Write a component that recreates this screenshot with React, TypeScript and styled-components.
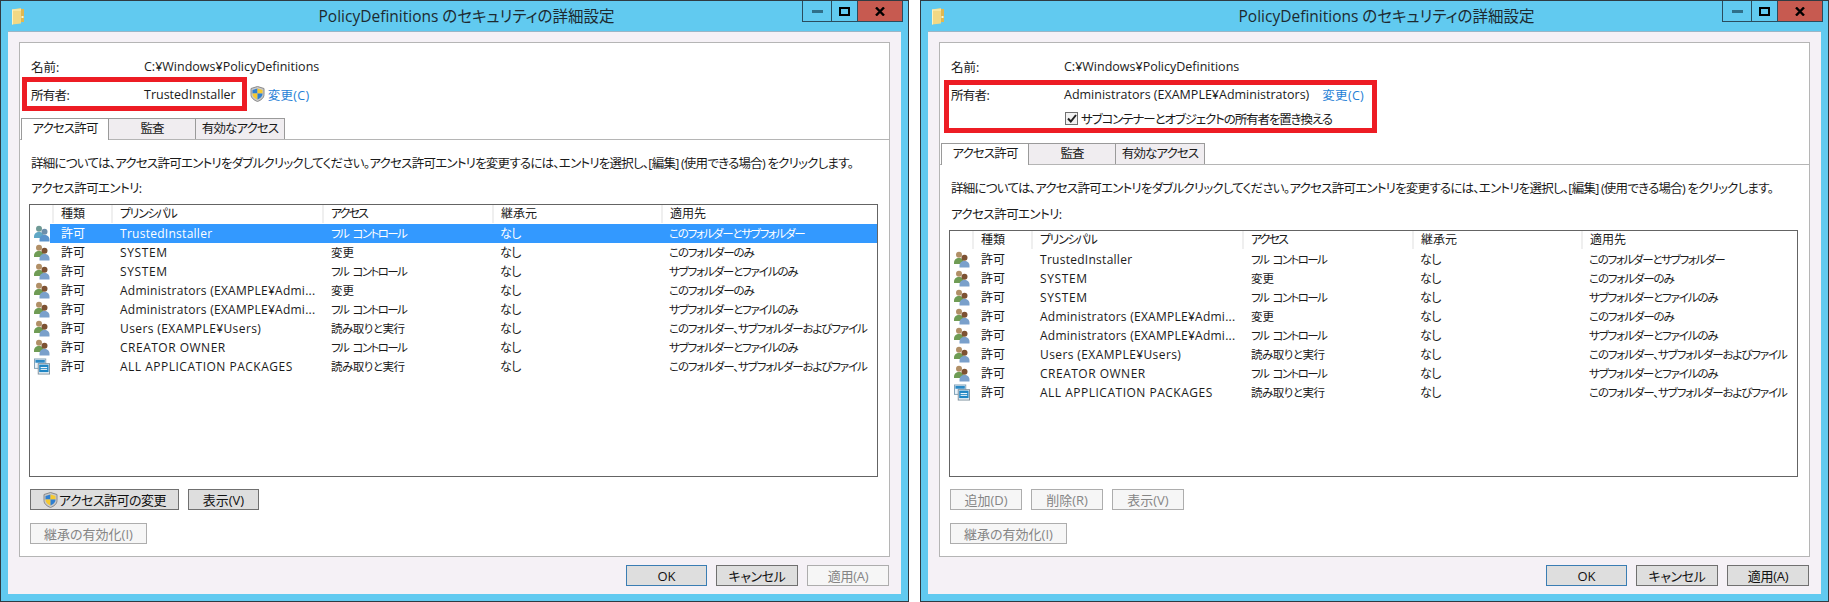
import React from "react";
import styled, { createGlobalStyle } from "styled-components";

const GlobalStyle = createGlobalStyle`
  html, body {
    margin: 0;
    padding: 0;
    background: #fff;
  }
  body {
    font-family: "Open Sans", "Noto Sans CJK JP", sans-serif;
    font-size: 12.5px;
    color: #1a1a1a;
    font-feature-settings: "palt";
  }
`;

const Page = styled.div`
  display: flex;
  gap: 11px;
  width: 1829px;
  height: 602px;
  overflow: hidden;
`;

const Frame = styled.div`
  box-sizing: border-box;
  width: 909px;
  height: 602px;
  display: flex;
  flex-direction: column;
  background: #61caf0;
  border: 1px solid #2f3b42;
  padding: 0 7px 7px;
`;

const TitleBar = styled.div`
  height: 30px;
  flex: none;
  display: grid;
  grid-template-columns: 1fr auto 1fr;
  margin: 0 -5px 0 -6px;
`;

const TitleIcon = styled.svg`
  width: 14px;
  height: 17px;
  margin: 7px 0 0 9px;
`;

const Title = styled.div`
  font-size: 15.5px;
  line-height: 30px;
  color: #1d2a30;
  padding-left: 25px;
`;

const Controls = styled.div`
  justify-self: end;
  align-self: start;
  display: flex;
  height: 21px;
  box-sizing: border-box;
  border: 1px solid #2a4c5e;
  border-top: 0;
  margin-right: 3px;
`;

const Control = styled.div<{ $w: number; $close?: boolean }>`
  box-sizing: border-box;
  width: ${(p) => p.$w}px;
  display: flex;
  align-items: center;
  justify-content: center;
  background: ${(p) => (p.$close ? "#c75a50" : "transparent")};
  & + & {
    border-left: 1px solid #2a4c5e;
  }
`;

const Panel = styled.div`
  flex: 1;
  box-sizing: border-box;
  background: #f5f1f6;
  border-top: 1px solid #9bb6c6;
  padding: 10px 11px 7px;
  display: flex;
  flex-direction: column;
`;

const Content = styled.div`
  position: relative;
  box-sizing: border-box;
  height: 515px;
  background: #fff;
  border: 1px solid #b5b5b5;
  display: flex;
  flex-direction: column;
  padding: 14px 0 12px;
`;

const RedBox = styled.div<{ $l: number; $t: number; $w: number; $h: number }>`
  position: absolute;
  box-sizing: border-box;
  left: ${(p) => p.$l}px;
  top: ${(p) => p.$t}px;
  width: ${(p) => p.$w}px;
  height: ${(p) => p.$h}px;
  border: 5px solid #ed1c24;
  pointer-events: none;
`;

const InfoRow = styled.div`
  display: flex;
  align-items: center;
  height: 18px;
  padding-left: 11px;
  margin-bottom: 10px;
  white-space: nowrap;
`;

const InfoLabel = styled.span<{ $sp?: number }>`
  width: 113px;
  flex: none;
  letter-spacing: ${(p) => p.$sp ?? 0}px;
`;

const LinkText = styled.span<{ $gap: number }>`
  display: inline-flex;
  align-items: center;
  margin-left: ${(p) => p.$gap}px;
  color: #1f7fd6;
  gap: 3px;
  letter-spacing: 0.3px;
`;

const CheckRow = styled.div`
  display: flex;
  align-items: center;
  height: 18px;
  padding-left: 125px;
  margin: -4px 0 11px;
  gap: 3px;
  letter-spacing: -1.1px;
`;

const CheckBox = styled.span`
  box-sizing: border-box;
  width: 13px;
  height: 13px;
  border: 1px solid #707070;
  background: #f2f2f2;
  display: flex;
  align-items: center;
  justify-content: center;
`;

const TabStrip = styled.div`
  display: flex;
  height: 22px;
  margin-top: 5px;
  padding-left: 1px;
  border-bottom: 1px solid #b5b5b5;
  box-sizing: border-box;
  flex: none;
`;

const Tab = styled.div<{ $w: number; $active?: boolean }>`
  box-sizing: border-box;
  width: ${(p) => p.$w}px;
  height: ${(p) => (p.$active ? "22px" : "21px")};
  text-align: center;
  line-height: 20px;
  letter-spacing: -0.9px;
  background: ${(p) => (p.$active ? "#fff" : "#f0edf0")};
  border: 1px solid #9a9a9a;
  border-bottom: 0;
  border-left-width: ${(p) => (p.$active ? "1px" : "0")};
  border-right-width: 1px;
  position: relative;
  z-index: ${(p) => (p.$active ? 1 : 0)};
`;

const Help = styled.div`
  padding: 15px 0 0 11px;
  line-height: 18px;
  white-space: nowrap;
  letter-spacing: -0.76px;
`;

const ListLabel = styled.div<{ $top: number }>`
  padding: ${(p) => p.$top}px 0 0 11px;
  line-height: 18px;
  letter-spacing: -0.55px;
`;

const ListBox = styled.div`
  box-sizing: border-box;
  flex: 1;
  margin: 6px 11px 0 9px;
  border: 1px solid #646464;
  min-height: 0;
  font-size: 12px;
`;

const HeadRow = styled.div`
  display: grid;
  grid-template-columns: 24px 59px 211px 170px 169px 1fr;
  height: 19px;
  line-height: 17px;
`;

const HeadCell = styled.div<{ $sp?: number }>`
  box-sizing: border-box;
  border-right: 2px solid #efefef;
  padding-left: 7px;
  height: 18px;
  letter-spacing: ${(p) => p.$sp ?? 0}px;
  &:last-child {
    border-right: 0;
  }
`;

const Row = styled.div<{ $selected?: boolean }>`
  display: grid;
  grid-template-columns: 20px 63px 211px 170px 169px 1fr;
  height: 19px;
  line-height: 19px;
  color: ${(p) => (p.$selected ? "#fff" : "#1a1a1a")};
`;

const IconCell = styled.div`
  display: flex;
  align-items: center;
  justify-content: flex-end;
  background: #fff;
`;

const Cell = styled.div<{ $selected?: boolean; $pad?: number; $sp?: number; $kana?: boolean }>`
  padding-left: ${(p) => p.$pad ?? 7}px;
  white-space: nowrap;
  overflow: hidden;
  font-size: ${(p) => (p.$kana ? "11.5px" : "12px")};
  word-spacing: ${(p) => (p.$kana ? "3px" : "0")};
  letter-spacing: ${(p) => p.$sp ?? 0}px;
  background: ${(p) => (p.$selected ? "#3399ff" : "transparent")};
`;

const ButtonRow = styled.div<{ $top: number }>`
  display: flex;
  gap: 9px;
  padding: ${(p) => p.$top}px 0 0 10px;
`;

const Btn = styled.div<{ $w: number; $off?: boolean; $main?: boolean; $sp?: number }>`
  box-sizing: border-box;
  width: ${(p) => p.$w}px;
  height: 21px;
  display: flex;
  align-items: center;
  justify-content: center;
  gap: 1px;
  font-size: 13px;
  letter-spacing: ${(p) => p.$sp ?? 0}px;
  background: ${(p) => (p.$off ? "#f6f6f6" : "#dedede")};
  color: ${(p) => (p.$off ? "#858585" : "#111")};
  border: 1px solid
    ${(p) => (p.$off ? "#adadad" : p.$main ? "#3a7db3" : "#707070")};
`;

const Footer = styled.div`
  display: flex;
  justify-content: flex-end;
  gap: 9px;
  padding: 8px 1px 0 0;
`;

const Shield = () => (
  <svg width="15" height="16" viewBox="0 0 15 16">
    <path d="M7.5.5 14 2.5v6c0 3.5-3 5.700-6.500 7C4 14.200 1 12 1 8.500v-6z" fill="#c9c9c9" stroke="#8a8a8a" />
    <path d="M7.500 2.500 2.500 4v3.500h5z" fill="#2f7fd0" />
    <path d="M7.500 2.500 12.500 4v3.500h-5z" fill="#f6c92f" />
    <path d="M2.500 7.500h5v6c-2.500-1-5-2.800-5-6z" fill="#f6c92f" />
    <path d="M12.500 7.500h-5v6c2.500-1 5-2.800 5-6z" fill="#2f7fd0" />
  </svg>
);

const FolderIcon = () => (
  <TitleIcon viewBox="0 0 14 17">
    <path d="M1 1.500 10 0v15.500L1 16.500z" fill="#f2d884" />
    <path d="M10 1h3v13h-3z" fill="#e0b84f" />
    <path d="M1 1.500h9v1H2v14H1z" fill="#fff1be" />
    <rect x="10.500" y="8" width="2" height="2" fill="#fff4c8" />
  </TitleIcon>
);

const UsersIcon = ({ selected }: { selected?: boolean }) => (
  <svg width="16" height="17" viewBox="0 0 16 17">
    <circle cx="5" cy="3.800" r="3" fill={selected ? "#6f9a96" : "#b18f66"} />
    <path d="M0 12c0-3.500 2-5 5-5s5 1.500 5 5v1H0z" fill={selected ? "#5fa7c5" : "#6f9c55"} />
    <circle cx="10.500" cy="6.800" r="3" fill={selected ? "#6d8eab" : "#7d5233"} />
    <path d="M5.500 15c0-3.500 2-5 5-5s5 1.500 5 5v1.500h-10z" fill={selected ? "#5b93cc" : "#7aa0cb"} />
  </svg>
);

const PackagesIcon = () => (
  <svg width="16" height="17" viewBox="0 0 17 17">
    <rect x="0.500" y="0.500" width="12" height="10" fill="#eaf3fa" stroke="#7f9fb5" />
    <rect x="1.500" y="1.500" width="10" height="3" fill="#2b8ac6" />
    <rect x="4.500" y="5.500" width="12" height="11" fill="#f4f8fb" stroke="#7d8f9c" />
    <rect x="5.500" y="6.500" width="10" height="8" fill="#1f86c4" />
    <rect x="7" y="9" width="7" height="1" fill="#fff" />
    <rect x="7" y="11" width="7" height="1" fill="#fff" />
  </svg>
);

type Entry = {
  principal: string;
  principalSp: number;
  access: string;
  accessSp: number;
  applies: string;
  appliesSp: number;
  pkg?: boolean;
};

const FULL = { access: "フル コントロール", accessSp: -1.6 };
const CHANGE = { access: "変更", accessSp: 0 };
const READ = { access: "読み取りと実行", accessSp: -0.5 };
const ONLY_THIS = { applies: "このフォルダーのみ", appliesSp: -1.1 };
const SUB_FILES = { applies: "サブフォルダーとファイルのみ", appliesSp: -1.14 };
const ALL = { applies: "このフォルダー、サブフォルダーおよびファイル", appliesSp: -1.1 };

const entries: Entry[] = [
  { principal: "TrustedInstaller", principalSp: 0.27, ...FULL, applies: "このフォルダーとサブフォルダー", appliesSp: -1.27 },
  { principal: "SYSTEM", principalSp: 0.6, ...CHANGE, ...ONLY_THIS },
  { principal: "SYSTEM", principalSp: 0.6, ...FULL, ...SUB_FILES },
  { principal: "Administrators (EXAMPLE¥Admi...", principalSp: 0.26, ...CHANGE, ...ONLY_THIS },
  { principal: "Administrators (EXAMPLE¥Admi...", principalSp: 0.26, ...FULL, ...SUB_FILES },
  { principal: "Users (EXAMPLE¥Users)", principalSp: 0.4, ...READ, ...ALL },
  { principal: "CREATOR OWNER", principalSp: 0.5, ...FULL, ...SUB_FILES },
  { principal: "ALL APPLICATION PACKAGES", principalSp: 0.5, ...READ, ...ALL, pkg: true },
];

const EntryList = ({ selectFirst }: { selectFirst?: boolean }) => (
  <ListBox>
    <HeadRow>
      <HeadCell />
      <HeadCell>種類</HeadCell>
      <HeadCell $sp={-1.4}>プリンシパル</HeadCell>
      <HeadCell $sp={-1.9}>アクセス</HeadCell>
      <HeadCell>継承元</HeadCell>
      <HeadCell>適用先</HeadCell>
    </HeadRow>
    {entries.map((e, i) => {
      const sel = selectFirst && i === 0;
      return (
        <Row key={i} $selected={sel}>
          <IconCell>{e.pkg ? <PackagesIcon /> : <UsersIcon selected={sel} />}</IconCell>
          <Cell $selected={sel} $pad={11}>許可</Cell>
          <Cell $selected={sel} $sp={e.principalSp}>{e.principal}</Cell>
          <Cell $selected={sel} $sp={e.accessSp} $kana>{e.access}</Cell>
          <Cell $selected={sel} $pad={6} $sp={-0.5}>なし</Cell>
          <Cell $selected={sel} $pad={6} $sp={e.appliesSp} $kana>{e.applies}</Cell>
        </Row>
      );
    })}
  </ListBox>
);

const SecurityWindow = ({ replaced }: { replaced?: boolean }) => (
  <Frame>
    <TitleBar>
      <FolderIcon />
      <Title>PolicyDefinitions のセキュリティの詳細設定</Title>
      <Controls>
        <Control $w={28}>
          <svg width="11" height="4"><rect width="11" height="3" y="1" fill="#2f6f8a" /></svg>
        </Control>
        <Control $w={26}>
          <svg width="11" height="9"><rect x="1" y="1" width="9" height="7" fill="none" stroke="#000" strokeWidth="2" /></svg>
        </Control>
        <Control $w={45} $close>
          <svg width="10" height="9"><path d="M1 0.500 9 8.500M9 0.500 1 8.500" stroke="#000" strokeWidth="2.400" /></svg>
        </Control>
      </Controls>
    </TitleBar>
    <Panel>
      <Content>
        {replaced ? (
          <RedBox $l={4} $t={37} $w={433} $h={53} />
        ) : (
          <RedBox $l={2} $t={34} $w={225} $h={34} />
        )}
        <InfoRow>
          <InfoLabel>名前:</InfoLabel>
          C:¥Windows¥PolicyDefinitions
        </InfoRow>
        <InfoRow>
          <InfoLabel $sp={-0.7}>所有者:</InfoLabel>
          {replaced ? "Administrators (EXAMPLE¥Administrators)" : "TrustedInstaller"}
          {replaced ? (
            <LinkText $gap={13}>変更(C)</LinkText>
          ) : (
            <LinkText $gap={14}>
              <Shield />
              変更(C)
            </LinkText>
          )}
        </InfoRow>
        {replaced && (
          <CheckRow>
            <CheckBox>
              <svg width="10" height="9" viewBox="0 0 10 9">
                <path d="M1 4.500 3.800 7.500 9 1" fill="none" stroke="#222" strokeWidth="2" />
              </svg>
            </CheckBox>
            サブコンテナーとオブジェクトの所有者を置き換える
          </CheckRow>
        )}
        <TabStrip>
          <Tab $w={88} $active>アクセス許可</Tab>
          <Tab $w={87}>監査</Tab>
          <Tab $w={89}>有効なアクセス</Tab>
        </TabStrip>
        <Help>
          詳細については、アクセス許可エントリをダブルクリックしてください。アクセス許可エントリを変更するには、エントリを選択し、[編集] (使用できる場合) をクリックします。
        </Help>
        <ListLabel $top={replaced ? 8 : 7}>アクセス許可エントリ:</ListLabel>
        <EntryList selectFirst={!replaced} />
        {replaced ? (
          <ButtonRow $top={12}>
            <Btn $w={72} $off>追加(D)</Btn>
            <Btn $w={72} $off>削除(R)</Btn>
            <Btn $w={72} $off>表示(V)</Btn>
          </ButtonRow>
        ) : (
          <ButtonRow $top={12}>
            <Btn $w={149} $sp={-0.5}>
              <Shield />
              アクセス許可の変更
            </Btn>
            <Btn $w={71}>表示(V)</Btn>
          </ButtonRow>
        )}
        <ButtonRow $top={13}>
          <Btn $w={117} $off>継承の有効化(I)</Btn>
        </ButtonRow>
      </Content>
      <Footer>
        <Btn $w={81} $main>OK</Btn>
        <Btn $w={82} $sp={-0.4}>キャンセル</Btn>
        <Btn $w={82} $off={!replaced} $sp={-0.3}>適用(A)</Btn>
      </Footer>
    </Panel>
  </Frame>
);

export default function App() {
  return (
    <>
      <GlobalStyle />
      <Page>
        <SecurityWindow />
        <SecurityWindow replaced />
      </Page>
    </>
  );
}
